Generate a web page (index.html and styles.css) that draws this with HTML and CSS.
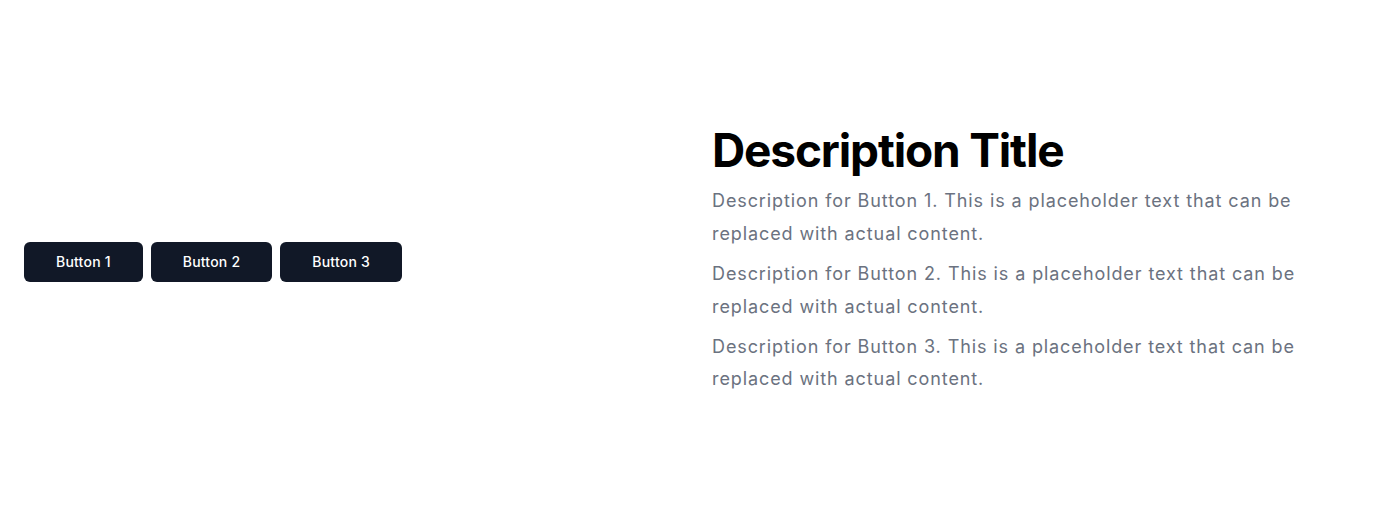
FILE: index.html
```html
<!DOCTYPE html>
<html lang="en">
<head>
<meta charset="utf-8">
<title>Buttons</title>
<link rel="stylesheet" href="styles.css">
</head>
<body>
<main class="page">
  <section class="left">
    <div class="buttons">
      <button class="btn">Button 1</button>
      <button class="btn">Button 2</button>
      <button class="btn">Button 3</button>
    </div>
  </section>
  <section class="right">
    <h1 class="title">Description Title</h1>
    <p class="desc">Description for Button 1. This is a placeholder text that can be replaced with actual content.</p>
    <p class="desc">Description for Button 2. This is a placeholder text that can be replaced with actual content.</p>
    <p class="desc">Description for Button 3. This is a placeholder text that can be replaced with actual content.</p>
  </section>
</main>
</body>
</html>
```

FILE: styles.css
```css
* { box-sizing: border-box; }
html, body { margin: 0; padding: 0; background: #ffffff; }
body { font-family: Inter, "Noto Sans", sans-serif; }
.page {
  display: grid;
  grid-template-columns: 1fr 1fr;
  column-gap: 48px;
  padding: 0 24px;
  min-height: 523px;
  align-items: center;
}
.buttons { display: flex; gap: 8px; }
.btn {
  font-family: Inter, sans-serif;
  font-size: 14px;
  font-weight: 500;
  letter-spacing: 0.015em;
  color: #ffffff;
  background: #111827;
  border: none;
  border-radius: 6px;
  height: 40px;
  padding: 0 32px;
}
.right { display: flex; flex-direction: column; }
.title {
  margin: 0 0 12px 0;
  font-size: 46px;
  line-height: 46px;
  font-weight: 700;
  letter-spacing: -0.025em;
  color: #000000;
}
.desc {
  margin: 0;
  font-size: 18px;
  line-height: 1.8;
  letter-spacing: 0.05em;
  color: #6b7280;
}
.desc + .desc { margin-top: 8px; }
```
